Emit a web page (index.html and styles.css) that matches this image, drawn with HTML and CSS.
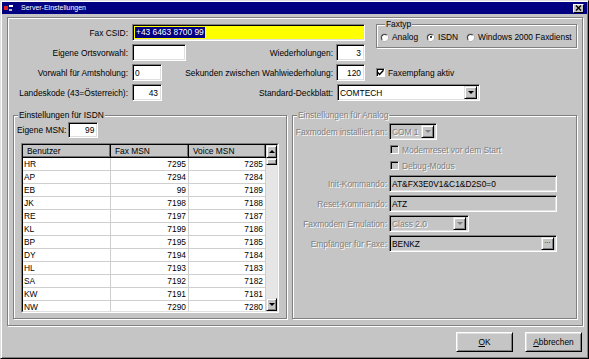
FILE: index.html
```html
<!DOCTYPE html>
<html lang="de">
<head>
<meta charset="utf-8">
<title>Server-Einstellungen</title>
<link rel="stylesheet" href="styles.css">
</head>
<body>
<div class="window">
  <div class="titlebar">
    <svg class="ticon" width="9" height="8" viewBox="0 0 9 8"><rect x="0" y="2" width="4" height="4" fill="#e02020"/><rect x="5" y="1" width="4" height="2" fill="#ffffff"/><rect x="5" y="5" width="3" height="2" fill="#c0c0c0"/></svg>
    <span class="ttext">Server-Einstellungen</span>
    <span class="tclose"><svg width="7" height="6" viewBox="0 0 7 6"><path d="M1 0.5 L6 5.5 M6 0.5 L1 5.5" stroke="#000" stroke-width="1.4"/></svg></span>
  </div>

  <div class="panel">
    <div class="topgrid">
      <div class="lbl la r1">Fax CSID:</div>
      <div class="field csid r1"><span class="sel">+43 6463 8700 99</span></div>
      <fieldset class="group faxtyp">
        <legend>Faxtyp</legend>
        <div class="radios">
          <span class="radio"></span><span class="rtext">Analog</span>
          <span class="radio on"></span><span class="rtext">ISDN</span>
          <span class="radio"></span><span class="rtext">Windows 2000 Faxdienst</span>
        </div>
      </fieldset>

      <div class="lbl la r2">Eigene Ortsvorwahl:</div>
      <div class="field w54 r2"></div>
      <div class="lbl lc r2">Wiederholungen:</div>
      <div class="field num cd r2">3</div>

      <div class="lbl la r3">Vorwahl für Amtsholung:</div>
      <div class="field w30 r3">0</div>
      <div class="lbl lc r3">Sekunden zwischen Wahlwiederholung:</div>
      <div class="field num cd r3">120</div>
      <div class="check cf r3"><span class="cbox"><svg width="7" height="7" viewBox="0 0 7 7"><path d="M0.5 3.2 L2.6 5.4 L6.5 1.2" fill="none" stroke="#000" stroke-width="1.5"/></svg></span><span>Faxempfang aktiv</span></div>

      <div class="lbl la r4">Landeskode (43=Österreich):</div>
      <div class="field num w30 r4">43</div>
      <div class="lbl lc r4">Standard-Deckblatt:</div>
      <div class="field combo deck r4"><span class="ctext">COMTECH</span><span class="dd"><i class="tri"></i></span></div>
    </div>

    <div class="groups">
      <fieldset class="group isdn">
        <legend>Einstellungen für ISDN</legend>
        <div class="msnrow">
          <span>Eigene MSN:</span>
          <div class="field num msn">99</div>
        </div>
        <div class="tbl">
          <div class="tbl-in">
            <table>
              <colgroup><col class="c1"><col class="c2"><col class="c3"></colgroup>
              <thead><tr><th>Benutzer</th><th>Fax MSN</th><th>Voice MSN</th></tr></thead>
              <tbody>
                <tr><td>HR</td><td class="n">7295</td><td class="n">7285</td></tr>
                <tr><td>AP</td><td class="n">7294</td><td class="n">7284</td></tr>
                <tr><td>EB</td><td class="n">99</td><td class="n">7189</td></tr>
                <tr><td>JK</td><td class="n">7198</td><td class="n">7188</td></tr>
                <tr><td>RE</td><td class="n">7197</td><td class="n">7187</td></tr>
                <tr><td>KL</td><td class="n">7199</td><td class="n">7186</td></tr>
                <tr><td>BP</td><td class="n">7195</td><td class="n">7185</td></tr>
                <tr><td>DY</td><td class="n">7194</td><td class="n">7184</td></tr>
                <tr><td>HL</td><td class="n">7193</td><td class="n">7183</td></tr>
                <tr><td>SA</td><td class="n">7192</td><td class="n">7182</td></tr>
                <tr><td>KW</td><td class="n">7191</td><td class="n">7181</td></tr>
                <tr><td>NW</td><td class="n">7290</td><td class="n">7280</td></tr>
              </tbody>
            </table>
            <div class="vscroll">
              <span class="sbtn"><i class="tri up"></i></span>
              <span class="thumb"></span>
              <span class="track"></span>
              <span class="sbtn"><i class="tri"></i></span>
            </div>
          </div>
        </div>
      </fieldset>

      <fieldset class="group analog">
        <legend class="dis">Einstellungen für Analog</legend>
        <div class="agrid">
          <div class="lbl dis">Faxmodem installiert an:</div>
          <div class="field combo off com"><span class="ctext dis">COM 1</span><span class="dd"><i class="tri gray"></i></span></div>

          <div></div>
          <div class="check"><span class="cbox off"></span><span class="dis">Modemreset vor dem Start</span></div>

          <div></div>
          <div class="check"><span class="cbox off"></span><span class="dis">Debug-Modus</span></div>

          <div class="lbl dis">Init-Kommando:</div>
          <div class="field off wide">AT&amp;FX3E0V1&amp;C1&amp;D2S0=0</div>

          <div class="lbl dis">Reset-Kommando:</div>
          <div class="field off wide">ATZ</div>

          <div class="lbl dis">Faxmodem Emulation:</div>
          <div class="field combo off emu"><span class="ctext dis">Class 2.0</span><span class="dd"><i class="tri gray"></i></span></div>

          <div class="lbl dis">Empfänger für Faxe:</div>
          <div class="field combo off wide"><span class="ctext">BENKZ</span><span class="dd dots">...</span></div>
        </div>
      </fieldset>
    </div>
  </div>

  <div class="buttons">
    <button class="btn"><u>O</u>K</button>
    <button class="btn"><u>A</u>bbrechen</button>
  </div>
</div>
</body>
</html>
```

FILE: styles.css
```css
* { box-sizing: border-box; }

html, body {
  margin: 0;
  padding: 0;
}

body {
  width: 589px;
  height: 359px;
  overflow: hidden;
  background: #c5c5c5;
  font-family: "Liberation Sans", Arial, sans-serif;
  font-size: 8.4px;
  color: #000;
}

.window {
  width: 589px;
  height: 359px;
  background: #c5c5c5;
  border: 1px solid;
  border-color: #dfdfdf #000 #000 #dfdfdf;
  box-shadow: inset 1px 1px 0 #fff, inset -1px -1px 0 #808080;
  padding: 1px;
  display: flex;
  flex-direction: column;
}

/* title bar */
.titlebar {
  height: 12px;
  flex: none;
  background: #000080;
  color: #fff;
  display: flex;
  align-items: center;
  padding: 0 3px 0 2px;
}

.ticon { flex: none; margin-right: 8px; }

.ttext {
  flex: 1;
  font-size: 7px;
  line-height: 12px;
  white-space: nowrap;
}

.tclose {
  width: 11px;
  height: 9px;
  background: #c5c5c5;
  border: 1px solid;
  border-color: #fff #000 #000 #fff;
  display: flex;
  align-items: center;
  justify-content: center;
}

/* etched panel */
.panel {
  height: 309px;
  flex: none;
  margin: 3px 4px 0 5px;
  border: 1px solid #808080;
  box-shadow: inset 1px 1px 0 #fff, 1px 1px 0 #fff;
  padding: 6px 0 0 1px;
}

.topgrid {
  display: grid;
  grid-template-columns: 123px 54px 150px 29px 11px 201px;
  grid-template-rows: repeat(4, 17px);
  row-gap: 3px;
}

.r1 { grid-row: 1; }
.r2 { grid-row: 2; }
.r3 { grid-row: 3; }
.r4 { grid-row: 4; }

.lbl {
  display: flex;
  align-items: center;
  justify-content: flex-end;
  white-space: nowrap;
}

.la { grid-column: 1; padding-right: 4px; }
.lc { grid-column: 3; padding-right: 3px; }
.cd { grid-column: 4; }
.cf { grid-column: 6; }

/* sunken fields */
.field {
  height: 17px;
  background: #fff;
  border: 1px solid;
  border-color: #808080 #fff #fff #808080;
  box-shadow: inset 1px 1px 0 #000, inset -1px -1px 0 #dfdfdf;
  display: flex;
  align-items: center;
  padding: 0 3px 0 2px;
  white-space: nowrap;
}

.field.num { justify-content: flex-end; }
.field.off { background: #c5c5c5; }

.csid {
  grid-column: 2 / 5;
  background: #ffff00;
  padding-left: 2px;
}

.sel {
  background: #000080;
  color: #fff;
  line-height: 11px;
  padding: 0 1px;
}

.w54 { grid-column: 2; width: 54px; }
.w30 { grid-column: 2; width: 30px; }

.combo { padding-right: 2px; }
.ctext { flex: 1; }

.deck {
  grid-column: 4 / 7;
  width: 143px;
  margin-left: 1px;
}

.dd {
  width: 13px;
  height: 13px;
  flex: none;
  background: #c5c5c5;
  border: 1px solid;
  border-color: #dfdfdf #000 #000 #dfdfdf;
  box-shadow: inset 1px 1px 0 #fff, inset -1px -1px 0 #808080;
  display: flex;
  align-items: center;
  justify-content: center;
}

.dd.dots {
  font-size: 7px;
  line-height: 6px;
  align-items: flex-start;
}

.tri {
  width: 0;
  height: 0;
  border-left: 3px solid transparent;
  border-right: 3px solid transparent;
  border-top: 3px solid #000;
}

.tri.up {
  border-top: 0;
  border-bottom: 3px solid #000;
}

.tri.gray { border-top-color: #808080; }

/* group boxes */
.group {
  margin: 0;
  padding: 0;
  min-width: 0;
  border: 1px solid #808080;
  box-shadow: inset 1px 1px 0 #fff, 1px 1px 0 #fff;
}

.group legend {
  margin-left: 4px;
  padding: 0 1px;
  line-height: 10px;
  background: #c5c5c5;
}

.faxtyp {
  grid-column: 6;
  grid-row: 1 / 3;
  height: 29px;
  margin-top: -5px;
  padding-left: 4px;
}

.radios {
  display: flex;
  align-items: center;
  height: 10px;
  margin-top: 3px;
}

.radio {
  width: 7px;
  height: 7px;
  flex: none;
  border-radius: 50%;
  background: #fff;
  border: 1px solid;
  border-color: #404040 #fff #fff #404040;
  box-shadow: 0 0 0 0.5px #a0a0a0;
  margin-right: 4px;
  position: relative;
}

.radio.on::after {
  content: "";
  position: absolute;
  left: 1.5px;
  top: 1.5px;
  width: 2px;
  height: 2px;
  border-radius: 50%;
  background: #000;
}

.rtext { margin-right: 9px; white-space: nowrap; }

.check {
  display: flex;
  align-items: center;
  white-space: nowrap;
}

.cbox {
  width: 9px;
  height: 9px;
  flex: none;
  background: #fff;
  border: 1px solid;
  border-color: #808080 #fff #fff #808080;
  box-shadow: inset 1px 1px 0 #000;
  margin-right: 3px;
  display: flex;
  align-items: center;
  justify-content: center;
}

.cbox.off { background: #c5c5c5; }

.cf .cbox { margin-right: 3px; }

.groups {
  display: flex;
  gap: 5px;
  height: 209px;
  margin: 9px 5px 0 4px;
}

.isdn { width: 274px; flex: none; }
.analog { flex: 1; }

.msnrow {
  display: flex;
  align-items: center;
  height: 16px;
  margin: 2px 0 0 3px;
  white-space: nowrap;
}

.msn {
  width: 30px;
  height: 16px;
  margin-left: 2px;
}

/* list table */
.tbl {
  width: 258px;
  height: 170px;
  margin: 5px 0 0 7px;
  border: 1px solid;
  border-color: #808080 #fff #fff #808080;
}

.tbl-in {
  height: 100%;
  border: 1px solid;
  border-color: #000 #dfdfdf #dfdfdf #000;
  background: #fff;
  display: flex;
  overflow: hidden;
}

table {
  width: 243px;
  flex: none;
  table-layout: fixed;
  border-collapse: separate;
  border-spacing: 0;
  align-self: flex-start;
}

.c1 { width: 88px; }
.c2 { width: 78px; }
.c3 { width: 77px; }

th {
  height: 13px;
  padding: 0 0 0 4px;
  font-weight: normal;
  text-align: left;
  line-height: 11px;
  background: #c5c5c5;
  border-right: 1px solid #000;
  border-bottom: 1px solid #000;
  box-shadow: inset -1px -1px 0 #707070;
  white-space: nowrap;
}

td {
  height: 13px;
  line-height: 12px;
  padding: 0 2px 0 1px;
  border-right: 1px solid #cfcfcf;
  border-bottom: 1px solid #cfcfcf;
  white-space: nowrap;
  overflow: hidden;
}

td.n { text-align: right; }

.vscroll {
  width: 11px;
  flex: none;
  display: flex;
  flex-direction: column;
  background: #e6e6e6;
}

.sbtn, .thumb {
  flex: none;
  background: #c5c5c5;
  border: 1px solid;
  border-color: #dfdfdf #000 #000 #dfdfdf;
  box-shadow: inset 1px 1px 0 #fff, inset -1px -1px 0 #808080;
  display: flex;
  align-items: center;
  justify-content: center;
}

.sbtn { height: 13px; }
.thumb { height: 7px; }
.track { flex: 1; }

/* analog */
.dis {
  color: #808080;
  text-shadow: 1px 1px 0 #fff;
}

.agrid {
  display: grid;
  grid-template-columns: 94px 1fr;
  grid-template-rows: 17px 13px 13px 17px 17px 17px 17px;
  row-gap: 3px;
  column-gap: 2px;
  margin-top: 3px;
}

.agrid .check { padding-left: 1px; }

.com { width: 48px; }
.emu { width: 80px; }
.wide { width: 168px; }

/* buttons */
.buttons {
  display: flex;
  justify-content: flex-end;
  gap: 12px;
  margin: 6px 5px 0 0;
}

.btn {
  width: 57px;
  height: 20px;
  padding: 0;
  font-family: "Liberation Sans", Arial, sans-serif;
  font-size: 8.4px;
  color: #000;
  background: #c5c5c5;
  border: 1px solid;
  border-color: #fff #000 #000 #fff;
  box-shadow: inset 1px 1px 0 #dfdfdf, inset -1px -1px 0 #808080;
}
```
